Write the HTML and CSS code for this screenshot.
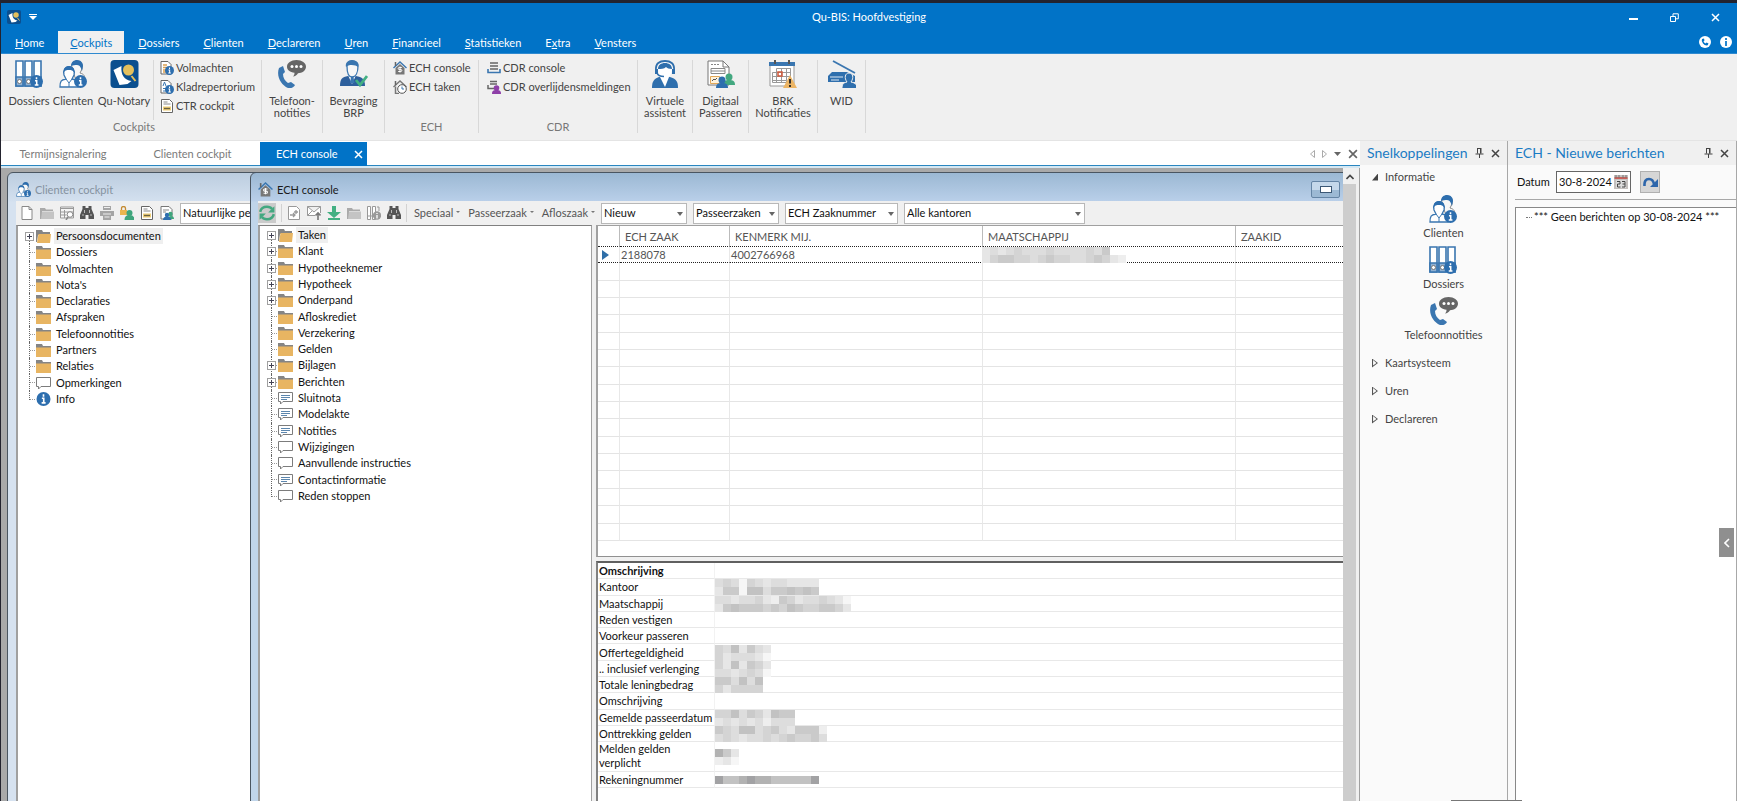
FILE: index.html
```html
<!DOCTYPE html>
<html lang="nl">
<head>
  <meta charset="UTF-8" />
  <title>Qu-BIS: Hoofdvestiging</title>
  <link rel="stylesheet" href="styles.css">
</head>
<body>
  <!-- Icon sprite -->
  <svg class="sprite" xmlns="http://www.w3.org/2000/svg">
    <symbol id="info-badge" viewBox="0 0 12 12">
      <circle cx="6" cy="6" r="6" fill="#2d6eae"/>
      <path d="M6 2v2M4.6 5.4h1.6v3.8M4.4 9.3h3.4" stroke="#fff" stroke-width="1.4" fill="none"/>
    </symbol>
    <symbol id="binders" viewBox="0 0 28 28">
      <path d="M1 1h7v25H1zM10 1h7v25h-7zM19 1h7v25h-7z" fill="#fff" stroke="#3a76b0" stroke-width="1.600"/>
      <path d="M1 17h7v9H1zM10 17h7v9h-7zM19 17h7v9h-7z" fill="#8fb0d2" stroke="#3a76b0" stroke-width="1.600"/>
      <g fill="#fff" stroke="#777"><circle cx="4.500" cy="21.500" r="2"/><circle cx="13.500" cy="21.500" r="2"/></g>
      <use href="#info-badge" x="15" y="15" width="13" height="13"/>
    </symbol>
    <symbol id="clients" viewBox="0 0 28 28">
      <path d="M13 9c-1-5 1-8 5-8s6 3 5 8l-2 4c4 1 5 3 5 7h-9z" fill="#f7f7f7" stroke="#888"/>
      <path d="M12 6c0-4 3-6 6-6 4 0 6 3 6 6l-1 5c-1-3-2-6-5-6-2 0-4 0-6 1z" fill="#2d6eae"/>
      <path d="M1 27c0-6 1-7 6-8l-2-4c-1-5 1-8 5-8s6 3 5 8l-2 4c5 1 6 2 6 8z" fill="#fff" stroke="#3a76b0" stroke-width="1.300"/>
      <path d="M4.500 13c0-5 2-7 5.500-7s5.500 2 5.500 7c-2-3-3-3-5.500-3s-4 0-5.500 3z" fill="#2d6eae"/>
      <path d="M7 19l3 4 3-4M10 23v4" stroke="#3a76b0" fill="none"/>
      <use href="#info-badge" x="15" y="15" width="13" height="13"/>
    </symbol>
    <symbol id="qunotary" viewBox="0 0 28 28">
      <rect width="28" height="28" rx="4" fill="#0b4f8f"/>
      <path d="M3 10l8-4c-1 9 3 14 10 15l-4 3-8 1z" fill="#fff"/>
      <circle cx="18" cy="10" r="5.500" fill="#e5c05c"/>
      <path d="M21 16l4 5" stroke="#e5c05c" stroke-width="2"/>
    </symbol>
    <symbol id="phone" viewBox="0 0 28 28">
      <path d="M18.500 0C24 0 28 3 28 6.700s-4 6.500-8 6.500c-1 2-3 3-5 3.300 1-1 1.500-2 1.500-3.800C12 12 9 10 9 6.700 9 3 13 0 18.500 0z" fill="#666"/>
      <g fill="#fff"><circle cx="14" cy="6.500" r="1.500"/><circle cx="18.500" cy="6.500" r="1.500"/><circle cx="23" cy="6.500" r="1.500"/></g>
      <path d="M1 8l4-2 2 6-2 2c0 4 2 7 5 9l3-1 4 3c-1 2-4 4-7 3C3 25-2 16 1 8z" fill="#3a76b0"/>
    </symbol>
    <symbol id="bevraging" viewBox="0 0 28 28">
      <path d="M0 26c0-7 2-9 8-10h8c6 1 9 3 9 10z" fill="#2d5f9c"/>
      <path d="M8 15l4 9 4-9z" fill="#fff"/><path d="M11 17h2.500l1 6h-4.500z" fill="#3a76b0"/>
      <path d="M7 6c0-3 2-5 5-5s6 2 6 5c0 6-2 11-6 11S7 12 7 6z" fill="#f7f7f7" stroke="#3a76b0" stroke-width="1.300"/>
      <path d="M6 7c-1-4 2-7 6-7s8 3 6 7c-2-2-9-3-12 0z" fill="#3a76b0"/>
      <path d="M16 20l4 5 7-9" stroke="#43b083" stroke-width="2.800" fill="none"/>
    </symbol>
    <symbol id="assistent" viewBox="0 0 28 28">
      <path d="M1 28c0-7 2-9 7-11h11c6 2 8 4 8 11z" fill="#2f6fad"/>
      <path d="M9 17l5 10 4-10z" fill="#fff"/>
      <path d="M7 9c0-5 3-8 7-8s7 3 7 8-3 9-7 9-7-4-7-9z" fill="#fff"/>
      <path d="M5 11C4 3 9 1 14 1s10 2 9 10" fill="none" stroke="#2f6fad" stroke-width="1.800"/>
      <path d="M7 9c0-4 3-6 7-6s7 2 7 6c-3 0-5-1-6-2-2 2-5 2-8 2z" fill="#2f6fad"/>
      <path d="M4 9h3v5H4zM21 9h3v5h-3z" fill="#2f6fad"/>
      <path d="M6 13c1 3 4 3.500 7 3.500" stroke="#2f6fad" stroke-width="1.500" fill="none"/>
    </symbol>
    <symbol id="digitaal" viewBox="0 0 28 28">
      <path d="M1 1h15l6 6v18H1z" fill="#fff" stroke="#777"/>
      <path d="M16 1v6h6" fill="none" stroke="#777"/>
      <path d="M4 4.500h8" stroke="#888" stroke-dasharray="2 1"/>
      <path d="M4 8.500h14v5H4zM4 11h14" stroke="#888" fill="none"/>
      <path d="M3.500 16.500h9v7h-9z" fill="#fff3dd" stroke="#e3a857"/><path d="M5 21l2-2 1 1 2-2" stroke="#555" fill="none"/>
      <circle cx="22" cy="17" r="3.500" fill="#43a880"/><path d="M16 25c0-4 2-5 6-5s6 1 6 5z" fill="#43a880"/>
      <circle cx="15" cy="20" r="3.500" fill="#2d6eae"/><path d="M9 28c0-4 2-5 6-5s6 1 6 5z" fill="#2d6eae"/>
    </symbol>
    <symbol id="brk" viewBox="0 0 28 28">
      <path d="M1 5h24v21H1z" fill="#fff" stroke="#999"/>
      <path d="M0 2h26v4H0z" fill="#3a76b0"/><path d="M6 0v4M20 0v4" stroke="#555" stroke-width="2"/>
      <path d="M7.500 8.500h14v4h-18v8h14v2h-14v-6h18M7.500 8.500v14M12.500 8.500v14M17.500 8.500v12M21.500 8.500v8" stroke="#999" fill="none"/>
      <path d="M9 12h4v4H9z" fill="none" stroke="#cf5a3c" stroke-width="1.500"/>
      <path d="M21 15l7 13H14z" fill="#ecb565"/><path d="M21 19v4.500M21 25v2" stroke="#222" stroke-width="1.800"/>
    </symbol>
    <symbol id="wid" viewBox="0 0 28 28">
      <path d="M5 1l22 12" stroke="#3a76b0" stroke-width="1.800"/>
      <path d="M4 12h15l8 4v6H0v-6z" fill="#2f6fad"/><path d="M2 17h13M3 20h8" stroke="#dfe9f3" stroke-width="1.200"/>
      <path d="M14 29c0-5 1-6 5-7-3-4-2-9 2-9s5 5 2 9c5 1 6 3 6 7z" fill="#2f6fad" stroke="#f0f0f0"/>
    </symbol>
    <symbol id="doc-orange" viewBox="0 0 14 14">
      <path d="M1 .5h7l3 3V13H1z" fill="#fff" stroke="#666"/><path d="M3 4h4M3 6.500h5M3 9h3M3 11h3" stroke="#dba04f" stroke-width="1.300"/>
      <use href="#info-badge" x="5" y="5" width="9" height="9"/>
    </symbol>
    <symbol id="doc-klad" viewBox="0 0 14 14">
      <path d="M1 .5h7l3 3V13H1z" fill="#fff" stroke="#666"/><path d="M3 6l1.500-4L6 6M3 8.500h4M3 11h3" stroke="#3a76b0" fill="none"/>
      <use href="#info-badge" x="5" y="5" width="9" height="9"/>
    </symbol>
    <symbol id="doc-ctr" viewBox="0 0 14 14">
      <path d="M1.500.5h8l3 3v10h-11z" fill="#fff" stroke="#666"/><path d="M3.500 3h4M3.500 5h7" stroke="#888"/>
      <path d="M3 7.500h8v4H3z" fill="#f0cf75"/><path d="M4 9.500h6" stroke="#6b6244" stroke-width="1.400"/>
    </symbol>
    <symbol id="house" viewBox="0 0 14 14">
      <path d="M2.500 7L7 3l4.500 4v6.500h-9z" fill="#777"/><path d="M.5 7L7 1l6.500 6" stroke="#3a76b0" stroke-width="1.400" fill="none"/>
      <path d="M2.500 1v4" stroke="#666" stroke-width="1.500"/>
      <path d="M8.800 6.500H6.200q-1 0-1 1t1 1h1.600q1 0 1 1t-1 1H5.200M7 5.500v6" stroke="#fff" fill="none"/>
    </symbol>
    <symbol id="house-clock" viewBox="0 0 14 14">
      <path d="M2.500 6.500v7H6" fill="none" stroke="#777" stroke-width="1.500"/><path d="M.5 7L7 1l6.500 6" stroke="#777" stroke-width="1.400" fill="none"/>
      <path d="M2.500 1v4" stroke="#666" stroke-width="1.500"/>
      <circle cx="9" cy="9" r="4.300" fill="#fff" stroke="#555"/><path d="M9 6.500V9h2" stroke="#3a76b0" fill="none"/>
    </symbol>
    <symbol id="cdr" viewBox="0 0 14 14">
      <path d="M3 2h8M3 5h8M3 8h8" stroke="#666" stroke-width="1.700"/>
      <path d="M1 8v3.500h12V8" fill="none" stroke="#3a76b0" stroke-width="1.600"/>
    </symbol>
    <symbol id="cdr-person" viewBox="0 0 14 14">
      <path d="M3 1.500h7M3 4h7M1 5v3.500h6" fill="none" stroke="#666" stroke-width="1.500"/>
      <circle cx="9.500" cy="8" r="2.800" fill="#8e3fa8"/><path d="M5 14c0-3 1-4 4.500-4S14 11 14 14z" fill="#8e3fa8"/>
    </symbol>
    <symbol id="new-doc" viewBox="0 0 14 14"><path d="M2 .5h7l3 3v10H2z" fill="#fff" stroke="#888"/><path d="M9 .5v3h3" fill="none" stroke="#888"/></symbol>
    <symbol id="folder-gray" viewBox="0 0 14 14"><path d="M0 2h5l1 1.500h7V5H2v8H0z" fill="#aaa"/><path d="M2 5.500h12V13H1z" fill="#c4c4c4"/></symbol>
    <symbol id="table-search" viewBox="0 0 14 14"><path d="M.5 1h13v11H.5zM0 2.500h14M4.500 4v8M.5 6h13M.5 9h6" fill="#f5f5f5" stroke="#999"/><circle cx="10" cy="8.500" r="2.800" fill="#fff" stroke="#888"/><path d="M8 11l-2 3" stroke="#888" stroke-width="1.500"/></symbol>
    <symbol id="binoculars" viewBox="0 0 14 14"><path d="M2.500 0h3v2h3V0h3v3L14 9v4H8.500V9h-3v4H0V9l2.500-6z" fill="#555"/><path d="M2 9h2M10 9h2M4.500 4v3M9.500 4v3" stroke="#bbb"/></symbol>
    <symbol id="printer" viewBox="0 0 14 14"><path d="M3 0h8v4H3zM0 5h14v5H0zM3 9h8v5H3z" fill="#a5a5a5"/><path d="M4 1.500h6M3 8h8M4.500 11h5" stroke="#eee"/></symbol>
    <symbol id="lock-person" viewBox="0 0 14 14"><path d="M1.500 4V2.500q0-2 2-2t2 2V4" fill="none" stroke="#c48b33" stroke-width="1.300"/><path d="M0 4h7v5H0z" fill="#eab54e"/><circle cx="9.500" cy="7" r="3" fill="#3fa57c"/><path d="M4.500 14q0-5 5-5t5 5z" fill="#3fa57c"/></symbol>
    <symbol id="doc-persons" viewBox="0 0 14 14"><path d="M1 .5h8l3 3V13H1z" fill="#fff" stroke="#777"/><path d="M3 4h6M3 6h3" stroke="#888"/><circle cx="10.500" cy="8" r="2.200" fill="#3fa57c"/><path d="M8 13q0-3 3-3t3 3z" fill="#3fa57c"/><circle cx="7" cy="9" r="2.200" fill="#2d6eae"/><path d="M3 14q0-3.500 4-3.500t4 3.500z" fill="#2d6eae"/></symbol>
    <symbol id="refresh" viewBox="0 0 14 14"><path d="M1 6q1-4.500 6-4.500 3 0 4.500 2M13 8q-1 4.500-6 4.500-3 0-4.500-2" fill="none" stroke="#43a880" stroke-width="2.200"/><path d="M13.500 1v5.500H8zM.5 13V7.500H6z" fill="#43a880"/></symbol>
    <symbol id="doc-arrows" viewBox="0 0 14 14"><path d="M1.500.5h8l3 3v10h-11z" fill="#fff" stroke="#999"/><path d="M7 6h4M9 4v4M3 9h5M6 7l2 2-2 2" stroke="#999" fill="none" stroke-width="1.300"/></symbol>
    <symbol id="mail-up" viewBox="0 0 14 14"><path d="M8 9.500H.5v-9h13V7M.5.500L7 6l6.500-5.500M.5 9.500L5 5" fill="#fff" stroke="#999"/><path d="M11 14V7M8.500 9.500L11 7l2.500 2.500" fill="none" stroke="#777" stroke-width="1.600"/></symbol>
    <symbol id="download" viewBox="0 0 14 14"><path d="M5 0h4v6h5l-7 6-7-6h5z" fill="#43b083"/><path d="M1 13h12" stroke="#43b083" stroke-width="2"/></symbol>
    <symbol id="binders-gray" viewBox="0 0 14 14"><path d="M.5.500h3v13h-3zM5.500.500h3v13h-3zM0 10h9" fill="#fff" stroke="#999"/><path d="M10 1h2v4" fill="none" stroke="#999"/><circle cx="10" cy="9.500" r="4.200" fill="#999"/><path d="M10 7v1M10 9v3.500" stroke="#fff" stroke-width="1.300"/></symbol>
    <symbol id="folder" viewBox="0 0 15 14"><path d="M0 1h6l1 2h8v2H0z" fill="#858585"/><path d="M0 4.500h15V14H0z" fill="#e8b562"/></symbol>
    <symbol id="folder-open" viewBox="0 0 15 14"><path d="M0 1h6l1 2h7v3H2L1 13H0z" fill="#858585"/><path d="M2.500 5H15l-1 9H1z" fill="#e8b562"/></symbol>
    <symbol id="bubble" viewBox="0 0 15 14"><path d="M.5 1.500h14v9H5L2.500 13v-2.500h-2z" fill="#fff" stroke="#7c7c7c"/></symbol>
    <symbol id="bubble-text" viewBox="0 0 15 14"><path d="M.5 1.500h14v9H5L2.500 13v-2.500h-2z" fill="#fff" stroke="#7c7c7c"/><path d="M3 4.500h9M3 6.500h9M3 8.500h6" stroke="#5c86ad"/></symbol>
    <symbol id="pin" viewBox="0 0 9 10"><path d="M2.500 0v5.500M6 0v5.500M2.500.500H6M.5 6h8M4.500 6v4M5.500.500v5" fill="none" stroke="#444"/></symbol>
    <symbol id="cross" viewBox="0 0 9 9"><path d="M1 1l7 7M8 1L1 8" stroke="currentColor" stroke-width="1.500"/></symbol>
  </svg>

  <div class="app">
    <header class="titlebar">
      <div class="quick">
        <svg width="14" height="14"><use href="#qunotary"/></svg>
        <svg width="8" height="6" viewBox="0 0 8 6"><path d="M0 .5h8" stroke="#fff"/><path d="M0 2h8L4 6z" fill="#fff"/></svg>
      </div>
      <h1>Qu-BIS: Hoofdvestiging</h1>
      <div class="window-buttons">
        <button aria-label="Minimaliseren"><svg width="9" height="9"><path d="M0 6h9" stroke="#fff" stroke-width="2"/></svg></button>
        <button aria-label="Herstellen"><svg width="9" height="9"><path d="M.5 3.500h5v5h-5zM3 3V.8h5.300v5H6" fill="none" stroke="#fff"/></svg></button>
        <button aria-label="Sluiten"><svg width="9" height="9"><use href="#cross"/></svg></button>
      </div>
    </header>

    <nav class="menu">
      <a href="#"><u>H</u>ome</a>
      <a href="#" class="active"><u>C</u>ockpits</a>
      <a href="#"><u>D</u>ossiers</a>
      <a href="#"><u>C</u>lienten</a>
      <a href="#"><u>D</u>eclareren</a>
      <a href="#"><u>U</u>ren</a>
      <a href="#"><u>F</u>inancieel</a>
      <a href="#"><u>S</u>tatistieken</a>
      <a href="#">E<u>x</u>tra</a>
      <a href="#"><u>V</u>ensters</a>
      <div class="menu-help">
        <svg width="12" height="12" viewBox="0 0 12 12"><circle cx="6" cy="6" r="6" fill="#fff"/><path d="M3 3l2-.5.5 2-1 .8q.7 1.700 2 2.200l1-1 2 1-.8 1.800Q6 10 4 7.500T3 3z" fill="#0173c7"/></svg>
        <svg width="12" height="12" viewBox="0 0 12 12"><circle cx="6" cy="6" r="6" fill="#fff"/><path d="M6 2v2M6 5v5" stroke="#0173c7" stroke-width="1.700"/></svg>
      </div>
    </nav>

    <div class="ribbon">
      <section class="group g-cockpits">
        <div class="group-items">
          <button class="big"><svg width="28" height="28"><use href="#binders"/></svg>Dossiers</button>
          <button class="big"><svg width="28" height="28"><use href="#clients"/></svg>Clienten</button>
          <button class="big wide"><svg width="29" height="28"><use href="#qunotary"/></svg>Qu-Notary</button>
          <div class="stack split">
            <button><svg width="14" height="14"><use href="#doc-orange"/></svg>Volmachten</button>
            <button><svg width="14" height="14"><use href="#doc-klad"/></svg>Kladrepertorium</button>
            <button><svg width="14" height="14"><use href="#doc-ctr"/></svg>CTR cockpit</button>
          </div>
        </div>
        <h2>Cockpits</h2>
      </section>
      <section class="group g-phone">
        <button class="big"><svg width="28" height="28"><use href="#phone"/></svg>Telefoon-<br>notities</button>
      </section>
      <section class="group g-brp">
        <button class="big"><svg width="28" height="28"><use href="#bevraging"/></svg>Bevraging<br>BRP</button>
      </section>
      <section class="group g-ech">
        <div class="stack">
          <button><svg width="14" height="14"><use href="#house"/></svg>ECH console</button>
          <button><svg width="14" height="14"><use href="#house-clock"/></svg>ECH taken</button>
        </div>
        <h2>ECH</h2>
      </section>
      <section class="group g-cdr">
        <div class="stack">
          <button><svg width="14" height="14"><use href="#cdr"/></svg>CDR console</button>
          <button><svg width="14" height="14"><use href="#cdr-person"/></svg>CDR overlijdensmeldingen</button>
        </div>
        <h2>CDR</h2>
      </section>
      <section class="group g-va">
        <button class="big"><svg width="28" height="28"><use href="#assistent"/></svg>Virtuele<br>assistent</button>
      </section>
      <section class="group g-dp">
        <button class="big"><svg width="28" height="28"><use href="#digitaal"/></svg>Digitaal<br>Passeren</button>
      </section>
      <section class="group g-brk">
        <button class="big"><svg width="28" height="28"><use href="#brk"/></svg>BRK<br>Notificaties</button>
      </section>
      <section class="group g-wid">
        <button class="big"><svg width="28" height="28"><use href="#wid"/></svg>WID</button>
      </section>
    </div>

    <div class="workspace">
      <main class="documents">
        <div class="doc-tabs">
          <button class="tab-a">Termijnsignalering</button>
          <button class="tab-b">Clienten cockpit</button>
          <button class="active">ECH console <svg width="9" height="9"><use href="#cross"/></svg></button>
          <div class="tab-tools">
            <svg width="5" height="8"><path d="M4.500.500v7l-4-3.500z" fill="none" stroke="#aaa"/></svg>
            <svg width="5" height="8"><path d="M.5.500v7l4-3.500z" fill="none" stroke="#aaa"/></svg>
            <svg width="7" height="4"><path d="M0 0h7L3.500 4z" fill="#666"/></svg>
            <svg class="gray" width="10" height="10"><use href="#cross"/></svg>
          </div>
        </div>

        <div class="mdi">
          <div class="desktop">
            <section class="window cockpit">
              <header><svg width="15" height="15"><use href="#clients"/></svg>Clienten cockpit</header>
              <div class="toolbar">
                <button aria-label="Nieuw"><svg width="14" height="14"><use href="#new-doc"/></svg></button>
                <button aria-label="Openen"><svg width="14" height="14"><use href="#folder-gray"/></svg></button>
                <button aria-label="Zoek in tabel"><svg width="14" height="14"><use href="#table-search"/></svg></button>
                <button aria-label="Zoeken"><svg width="14" height="14"><use href="#binoculars"/></svg></button>
                <button aria-label="Afdrukken"><svg width="14" height="14"><use href="#printer"/></svg></button>
                <button aria-label="Toegang"><svg width="14" height="14"><use href="#lock-person"/></svg></button>
                <button aria-label="CTR"><svg width="14" height="14"><use href="#doc-ctr"/></svg></button>
                <button aria-label="Passeren"><svg width="14" height="14"><use href="#doc-persons"/></svg></button>
                <span class="combo c-person"><select aria-label="Soort persoon"><option>Natuurlijke personen</option></select></span>
              </div>
              <div class="pane">
                <ul class="tree tree-client">
                  <li class="selected plus"><svg><use href="#folder-open"/></svg><span>Persoonsdocumenten</span></li>
                  <li><svg><use href="#folder"/></svg><span>Dossiers</span></li>
                  <li><svg><use href="#folder"/></svg><span>Volmachten</span></li>
                  <li><svg><use href="#folder"/></svg><span>Nota's</span></li>
                  <li><svg><use href="#folder"/></svg><span>Declaraties</span></li>
                  <li><svg><use href="#folder"/></svg><span>Afspraken</span></li>
                  <li><svg><use href="#folder"/></svg><span>Telefoonnotities</span></li>
                  <li><svg><use href="#folder"/></svg><span>Partners</span></li>
                  <li><svg><use href="#folder"/></svg><span>Relaties</span></li>
                  <li><svg><use href="#bubble"/></svg><span>Opmerkingen</span></li>
                  <li><svg><use href="#info-badge"/></svg><span>Info</span></li>
                </ul>
              </div>
            </section>

            <section class="window ech">
              <header>
                <svg width="15" height="15"><use href="#house"/></svg>ECH console
                <button class="min" aria-label="Minimaliseren"></button>
              </header>
              <div class="toolbar">
                <button class="pressed" aria-label="Vernieuwen"><svg width="16" height="16"><use href="#refresh"/></svg></button>
                <span class="sep"></span>
                <button aria-label="Koppelen"><svg width="14" height="14"><use href="#doc-arrows"/></svg></button>
                <button aria-label="Verzenden"><svg width="14" height="14"><use href="#mail-up"/></svg></button>
                <button aria-label="Ophalen"><svg width="14" height="14"><use href="#download"/></svg></button>
                <button aria-label="Openen"><svg width="14" height="14"><use href="#folder-gray"/></svg></button>
                <button aria-label="Dossier info"><svg width="14" height="14"><use href="#binders-gray"/></svg></button>
                <button aria-label="Zoeken"><svg width="14" height="14"><use href="#binoculars"/></svg></button>
                <span class="sep"></span>
                <button class="drop">Speciaal</button>
                <button class="drop">Passeerzaak</button>
                <button class="drop">Afloszaak</button>
                <span class="combo c-status"><select aria-label="Status"><option>Nieuw</option></select></span>
                <span class="combo c-status"><select aria-label="Soort zaak"><option>Passeerzaken</option></select></span>
                <span class="combo c-number"><select aria-label="Zoeken op"><option>ECH Zaaknummer</option></select></span>
                <span class="combo c-office"><select aria-label="Kantoor"><option>Alle kantoren</option></select></span>
              </div>
              <div class="split-view">
                <div class="pane">
                  <ul class="tree tree-ech">
                    <li class="selected plus"><svg><use href="#folder-open"/></svg><span>Taken</span></li>
                    <li class="plus"><svg><use href="#folder"/></svg><span>Klant</span></li>
                    <li class="plus"><svg><use href="#folder"/></svg><span>Hypotheeknemer</span></li>
                    <li class="plus"><svg><use href="#folder"/></svg><span>Hypotheek</span></li>
                    <li class="plus"><svg><use href="#folder"/></svg><span>Onderpand</span></li>
                    <li><svg><use href="#folder"/></svg><span>Afloskrediet</span></li>
                    <li><svg><use href="#folder"/></svg><span>Verzekering</span></li>
                    <li><svg><use href="#folder"/></svg><span>Gelden</span></li>
                    <li class="plus"><svg><use href="#folder"/></svg><span>Bijlagen</span></li>
                    <li class="plus"><svg><use href="#folder"/></svg><span>Berichten</span></li>
                    <li><svg><use href="#bubble-text"/></svg><span>Sluitnota</span></li>
                    <li><svg><use href="#bubble-text"/></svg><span>Modelakte</span></li>
                    <li><svg><use href="#bubble-text"/></svg><span>Notities</span></li>
                    <li><svg><use href="#bubble"/></svg><span>Wijzigingen</span></li>
                    <li><svg><use href="#bubble"/></svg><span>Aanvullende instructies</span></li>
                    <li><svg><use href="#bubble-text"/></svg><span>Contactinformatie</span></li>
                    <li><svg><use href="#bubble"/></svg><span>Reden stoppen</span></li>
                  </ul>
                </div>
                <div class="details">
                  <div class="grid-pane">
                    <table class="cases">
                      <thead>
                        <tr><th class="col-mark"></th><th class="col-case">ECH ZAAK</th><th class="col-ref">KENMERK MIJ.</th><th class="col-ref">MAATSCHAPPIJ</th><th>ZAAKID</th></tr>
                      </thead>
                      <tbody id="caseRows">
                        <tr class="current"><td><i class="marker"></i></td><td>2188078</td><td>4002766968</td><td><div class="mosaic" data-tones="3434544454444546 356655456554456532"></div></td><td></td></tr>
                      </tbody>
                    </table>
                  </div>
                  <div class="props-pane">
                    <table class="props">
                      <tr><th class="strong">Omschrijving</th><td></td></tr>
                      <tr><th>Kantoor</th><td><div class="mosaic" data-tones="4541543443333 3661774667676"></div></td></tr>
                      <tr><th>Maatschappij</th><td><div class="mosaic" data-tones="44344532653445431 36766656576556653"></div></td></tr>
                      <tr><th>Reden vestigen</th><td></td></tr>
                      <tr><th>Voorkeur passeren</th><td></td></tr>
                      <tr><th>Offertegeldigheid</th><td><div class="mosaic" data-tones="5473643 5344431"></div></td></tr>
                      <tr><th>.. inclusief verlenging</th><td><div class="mosaic" data-tones="5373653 4434541"></div></td></tr>
                      <tr><th>Totale leningbedrag</th><td><div class="mosaic" data-tones="664747 535555"></div></td></tr>
                      <tr><th>Omschrijving</th><td></td></tr>
                      <tr><th>Gemelde passeerdatum</th><td><div class="mosaic" data-tones="5574653766 3434342444"></div></td></tr>
                      <tr><th>Onttrekking gelden</th><td><div class="mosaic" data-tones="65477456436662 45434454565564"></div></td></tr>
                      <tr class="double"><th>Melden gelden<br>verplicht</th><td><div class="mosaic" data-tones="863 231"></div></td></tr>
                      <tr><th>Rekeningnummer</th><td><div class="mosaic" data-tones="9778988777779"></div></td></tr>
                    </table>
                  </div>
                </div>
              </div>
            </section>
          </div>
          <div class="scrollbar"><svg width="8" height="6"><path d="M.5 5L4 1.500 7.500 5" fill="none" stroke="#444" stroke-width="1.600"/></svg></div>
        </div>
      </main>

      <aside class="panel shortcuts">
        <header><h2>Snelkoppelingen</h2><svg width="9" height="10"><use href="#pin"/></svg><svg width="9" height="9"><use href="#cross"/></svg></header>
        <div class="panel-body">
          <button class="fold open">Informatie</button>
          <div class="links">
            <a href="#"><svg width="28" height="28"><use href="#clients"/></svg>Clienten</a>
            <a href="#"><svg width="28" height="28"><use href="#binders"/></svg>Dossiers</a>
            <a href="#"><svg width="28" height="28"><use href="#phone"/></svg>Telefoonnotities</a>
          </div>
          <button class="fold">Kaartsysteem</button>
          <button class="fold">Uren</button>
          <button class="fold">Declareren</button>
        </div>
      </aside>

      <aside class="panel messages">
        <header><h2>ECH - Nieuwe berichten</h2><svg width="9" height="10"><use href="#pin"/></svg><svg width="9" height="9"><use href="#cross"/></svg></header>
        <div class="panel-body">
          <div class="date-row">
            <label for="datum">Datum</label>
            <div class="date-box">
              <input type="text" id="datum" value="30-8-2024">
              <svg width="14" height="14" viewBox="0 0 14 14"><path d="M0 0h14v14H0z" fill="#c4c0be"/><path d="M.5 2h13v2H.5z" fill="#c9605a"/><path d="M2 0v3M5 0v3M9 0v3M12 0v3" stroke="#777"/><path d="M2 5h10v8H2z" fill="#ddd"/><path d="M3 6.500h3v2.500H3.500V12H6.500M8 6.500h3V12H8M8.500 9H11" fill="none" stroke="#444"/></svg>
            </div>
            <button class="reload" aria-label="Ophalen"><svg width="15" height="12" viewBox="0 0 15 12"><path d="M1.500 10Q1 3 6 3q4 0 5 5" fill="none" stroke="#2d66ab" stroke-width="2.600"/><path d="M15 3v8H7z" fill="#2d66ab"/></svg></button>
          </div>
          <div class="message-list">
            <p>*** Geen berichten op 30-08-2024 ***</p>
            <button class="slide-out" aria-label="Uitklappen"><svg width="6" height="10"><path d="M5 1L1 5l4 4" fill="none" stroke="#fff" stroke-width="1.600"/></svg></button>
          </div>
        </div>
      </aside>
    </div>
    <div class="handle"></div>
  </div>

  <script src="script.js"></script>
</body>
</html>
```

FILE: styles.css
```css
* {
  box-sizing: border-box;
}

body, h1, h2, ul, p {
  margin: 0;
  padding: 0;
}

body {
  font-family: Lato, 'Open Sans', sans-serif;
  font-size: 11px;
  line-height: 16px;
  color: #1a1a1a;
  background: #fff;
}

button, input, select {
  font: inherit;
  color: inherit;
  margin: 0;
  padding: 0;
  border: none;
  background: none;
}

a {
  color: inherit;
  text-decoration: none;
}

svg {
  flex: none;
  display: block;
}

.sprite {
  position: absolute;
  width: 0;
  height: 0;
}

.app {
  display: flex;
  flex-direction: column;
  height: 100vh;
  border-top: 3px solid #23232e;
  border-left: 1px solid #23232e;
  overflow: hidden;
  position: relative;
}

/* Title bar */
.titlebar {
  display: grid;
  grid-template-columns: 1fr auto 1fr;
  align-items: center;
  height: 28px;
  background: #0173c7;
  color: #fff;
}

.titlebar h1 {
  font-size: 11px;
  font-weight: normal;
}

.quick {
  display: flex;
  align-items: center;
  gap: 8px;
  padding-left: 6px;
}

.window-buttons {
  display: flex;
  justify-content: flex-end;
  gap: 32px;
  padding-right: 17px;
}

/* Menu */
.menu {
  display: flex;
  height: 23px;
  padding-left: 2px;
  background: #0173c7;
  border-bottom: 1px solid #2f8ad0;
  color: #fff;
}

.menu a {
  padding: 4px 12px 0;
}

.menu a.active {
  margin: 0 2px;
  background: #f0f0f0;
  color: #0173c7;
}

.menu-help {
  display: flex;
  gap: 9px;
  margin-left: auto;
  padding: 5px 5px 0 0;
}

/* Ribbon */
.ribbon {
  display: flex;
  height: 87px;
  padding: 6px 0 7px;
  background: #f0f0f0;
  border-bottom: 1px solid #e4e4e4;
  color: #444;
}

.group {
  display: flex;
  flex-direction: column;
  justify-content: space-between;
  border-right: 1px solid #d8d8d8;
}

.group h2 {
  font-size: 11px;
  font-weight: normal;
  line-height: 12px;
  text-align: center;
  color: #777;
}

.g-cockpits { width: 261px; padding-left: 6px; }
.g-phone { width: 61px; }
.g-brp { width: 62px; }
.g-ech { width: 94px; }
.g-cdr { width: 159px; }
.g-va { width: 55px; }
.g-dp { width: 56px; }
.g-brk { width: 69px; }
.g-wid { width: 48px; }

.group-items {
  display: flex;
}

.big {
  display: flex;
  flex-direction: column;
  align-items: center;
  line-height: 12px;
  width: 100%;
}

.big svg {
  margin-bottom: 7px;
}

.group-items .big {
  width: 44px;
}

.group-items .big.wide {
  width: 58px;
}

.stack {
  display: flex;
  flex-direction: column;
  align-items: flex-start;
  padding-left: 8px;
}

.stack button {
  display: flex;
  align-items: center;
  gap: 2px;
  height: 19px;
  padding-bottom: 3px;
  white-space: nowrap;
}

.stack.split {
  border-left: 1px solid #d8d8d8;
  height: 60px;
  padding-left: 6px;
}

/* Workspace */
.workspace {
  flex: 1;
  display: grid;
  grid-template-columns: 1fr 148px 229px;
  min-height: 0;
}

.documents {
  display: flex;
  flex-direction: column;
  min-width: 0;
}

.doc-tabs {
  display: flex;
  height: 27px;
  padding-top: 1px;
  border-bottom: 2px solid #d5e8f3;
  box-shadow: inset 0 -1px 0 #2a86c0;
  background: #fff;
  color: #7a7a7a;
}

.doc-tabs button.tab-a { width: 124px; }
.doc-tabs button.tab-b { width: 135px; }

.doc-tabs button.active {
  display: flex;
  align-items: center;
  justify-content: space-between;
  width: 107px;
  padding: 0 4px 0 16px;
  background: #0173c7;
  color: #fff;
}

.tab-tools {
  display: flex;
  align-items: center;
  gap: 7px;
  margin-left: auto;
  padding-right: 2px;
}

.tab-tools .gray {
  color: #666;
}

.mdi {
  flex: 1;
  display: flex;
  min-height: 0;
  border-right: 1px solid #a0a0a0;
  background: #f0f0f0;
}

.desktop {
  flex: 1;
  position: relative;
  overflow: hidden;
  background: #a9a9a9;
}

.scrollbar {
  width: 13px;
  margin-right: 3px;
  background: linear-gradient(#f0f0f0 16px, #cdcdcd 16px);
  display: flex;
  justify-content: center;
  padding-top: 6px;
}

/* MDI windows */
.window {
  position: absolute;
  top: 4px;
  bottom: -4px;
  display: flex;
  flex-direction: column;
  border: 1px solid #4a5560;
  border-radius: 6px 0 0 0;
  background: linear-gradient(#9bb8d3 0, #b9cfe9 28px, #c0d5ea 29px);
}

.window.cockpit {
  left: 6px;
  width: 600px;
  padding-left: 8px;
  background: linear-gradient(#bccddf 0, #d3e0ef 28px, #d6e2f0 29px);
  color: #8592a0;
}

.window.ech {
  left: 249px;
  right: -1px;
  padding-left: 7px;
}

.window header {
  display: flex;
  align-items: center;
  gap: 4px;
  height: 28px;
  padding-top: 5px;
}

.window .min {
  width: 29px;
  height: 17px;
  margin: 0 3px 0 auto;
  border: 1px solid #6585a5;
  border-radius: 2px;
  background: linear-gradient(#c5d8ea 50%, #9cb9d4 50%);
  display: flex;
  justify-content: center;
  align-items: center;
}

.window .min::before {
  content: "";
  width: 10px;
  height: 5px;
  border: 1px solid #3c5875;
  background: #fff;
}

.toolbar {
  display: flex;
  align-items: center;
  gap: 6px;
  height: 24px;
  background: #f0f0f0;
  color: #555;
}

.cockpit .toolbar {
  padding-left: 4px;
}

.sep {
  width: 1px;
  height: 18px;
  margin: 0 -1px;
  background: #d2d2d2;
}

.toolbar .pressed {
  width: 18px;
  height: 20px;
  padding: 2px 1px;
  background: #cbcbcb;
}

.drop {
  display: flex;
  align-items: center;
  gap: 3px;
  padding-left: 2px;
}

.drop::after {
  content: "";
  margin-bottom: 3px;
  border: 2px solid transparent;
  border-top-color: #777;
  border-bottom: 0;
}

.combo {
  position: relative;
  height: 21px;
  border: 1px solid #b8b8b8;
  background: #fff;
  color: #111;
}

.combo select {
  width: 100%;
  height: 19px;
  padding-left: 2px;
  appearance: none;
}

.combo::after {
  content: "";
  position: absolute;
  right: 3px;
  top: 8px;
  border: 3px solid transparent;
  border-top: 4px solid #666;
  border-bottom: 0;
}

.c-person { width: 130px; }
.c-status { width: 86px; }
.c-number { width: 113px; }
.c-office { width: 181px; }

.pane {
  flex: 1;
  background: #fff;
  border-left: 2px solid #a0a0a0;
  border-top: 1px solid #808080;
  padding-top: 1px;
}

.cockpit .pane {
  padding-top: 2px;
}

/* Trees */
.tree {
  list-style: none;
  display: grid;
  grid-auto-rows: 1fr;
  color: #111;
}

.tree-client { height: 179px; }
.tree-ech { height: 277px; }

.tree li {
  position: relative;
  display: flex;
  align-items: center;
  gap: 3px;
  padding-left: 18px;
}

.tree svg {
  width: 15px;
  height: 14px;
}

.tree span {
  padding: 0 2px;
  line-height: 16px;
}

.tree .selected span {
  background: #efefef;
}

/* dotted guides and the expander box */
.tree li::before {
  content: "";
  position: absolute;
  left: 11px;
  top: 0;
  bottom: 0;
  width: 6px;
  border-left: 1px dotted #666;
  background: repeating-linear-gradient(90deg, #999 0 1px, transparent 1px 2px) 0 8px / 6px 1px no-repeat;
}

.tree li:last-child::before {
  bottom: 7px;
}

.tree li:first-child::before {
  top: 8px;
  background: none;
}

.tree .plus::after {
  content: "";
  position: absolute;
  left: 8px;
  top: 5px;
  width: 7px;
  height: 7px;
  outline: 1px solid #a0a0a0;
  background:
    linear-gradient(#445, #445) center / 5px 1px no-repeat,
    linear-gradient(#445, #445) center / 1px 5px no-repeat,
    #fff;
}

/* ECH window content */
.split-view {
  flex: 1;
  display: grid;
  grid-template-columns: 334px 1fr;
  gap: 4px;
  min-height: 0;
  background: #f0f0f0;
}

.split-view .pane {
  border-right: 1px solid #a0a0a0;
}

.details {
  display: flex;
  flex-direction: column;
  min-width: 0;
}

.grid-pane {
  height: 332px;
  border-left: 2px solid #a0a0a0;
  border-top: 1px solid #a0a0a0;
  border-bottom: 1px solid #909090;
  background: #fff;
}

table {
  border-collapse: separate;
  border-spacing: 0;
}

.cases {
  table-layout: fixed;
  width: 100%;
  height: 315px;
  color: #555;
}

.cases th, .cases td {
  text-align: left;
  font-weight: normal;
  line-height: 15px;
  padding: 0 0 0 1px;
  height: 17px;
  border-bottom: 1px solid #e4e4e4;
  border-right: 1px solid #e8e8e8;
}

.cases th {
  height: 20px;
  padding-left: 5px;
  border-bottom: none;
  border-right: 1px solid #bbb;
}

.cases th:last-child, .cases td:last-child {
  border-right: none;
}

.col-mark { width: 22px; }
.col-case { width: 110px; }
.col-ref { width: 253px; }

.cases .current td {
  border-top: 1px dotted #222;
  border-bottom: 1px dotted #222;
}

.marker {
  display: block;
  margin-left: 3px;
  width: 0;
  border: 5px solid transparent;
  border-left: 7px solid #2f6fa8;
  border-right: 0;
}

.cases .mosaic {
  margin: -1px 0 -1px -2px;
}

.mosaic {
  position: relative;
}

.mosaic div {
  display: flex;
}

.mosaic i {
  width: 8px;
  height: 8px;
}

.props-pane {
  flex: 1;
  margin-top: 4px;
  border-left: 2px solid #808080;
  border-top: 2px solid #606060;
  background: #fff;
}

.props {
  width: 100%;
  height: 225px;
  color: #111;
}

.props .mosaic {
  margin-bottom: -1px;
}

.props th {
  width: 117px;
  padding: 0 0 0 1px;
  text-align: left;
  font-weight: normal;
  line-height: 15px;
  white-space: nowrap;
  border-bottom: 1px solid #e8e8e8;
  border-right: 1px solid #f2f2f2;
}

.props td {
  padding: 0;
  border-bottom: 1px solid #e8e8e8;
}

.props .strong {
  font-weight: bold;
}

.props .double th {
  line-height: 14px;
}

/* Side panels */
.panel {
  display: flex;
  flex-direction: column;
  background: #fafafa;
  color: #444;
  border-right: 1px solid #a8a8a8;
}

.panel header {
  display: flex;
  align-items: center;
  gap: 7px;
  height: 24px;
  padding: 0 7px;
  background: #f0f0f0;
}

.panel h2 {
  flex: 1;
  font-size: 14px;
  font-weight: normal;
  color: #1b7cc4;
  white-space: nowrap;
}

.shortcuts .panel-body {
  padding-top: 4px;
}

.fold {
  display: flex;
  align-items: center;
  gap: 7px;
  height: 28px;
  padding-left: 12px;
}

.fold.open {
  height: 16px;
}

.fold::before {
  content: "";
  width: 6px;
  height: 9px;
  background: #555;
  clip-path: polygon(0 0, 100% 50%, 0 100%, 0 85%, 75% 50%, 18% 18%, 18% 90%, 0 100%);
}

.fold.open::before {
  height: 7px;
  background: #444;
  clip-path: polygon(100% 0, 100% 100%, 0 100%);
}

.links {
  display: flex;
  flex-direction: column;
  align-items: center;
  padding: 10px 0 1px 20px;
}

.links a {
  display: flex;
  flex-direction: column;
  align-items: center;
  gap: 2px;
  height: 51px;
}

.messages .panel-body {
  flex: 1;
  display: flex;
  flex-direction: column;
  padding-left: 7px;
  color: #111;
}

.date-row {
  display: flex;
  align-items: center;
  height: 35px;
  padding-left: 2px;
  border-bottom: 1px solid #a8a8a8;
}

.date-row label {
  width: 39px;
}

.date-box {
  display: flex;
  align-items: center;
  width: 75px;
  height: 22px;
  padding: 0 2px;
  border: 1px solid #666;
  background: #fff;
}

.date-box input {
  flex: 1;
  min-width: 0;
}

.reload {
  display: flex;
  align-items: center;
  justify-content: center;
  width: 20px;
  height: 22px;
  margin-left: 9px;
  border: 1px solid #b0b0b0;
  background: #d6d6d6;
}

.message-list {
  position: relative;
  flex: 1;
  margin-top: 7px;
  padding: 1px 0 0 10px;
  border-left: 1px solid #888;
  border-top: 1px solid #888;
  background: #fff;
}

.message-list p {
  display: flex;
  align-items: center;
  gap: 2px;
  white-space: nowrap;
}

.message-list p::before {
  content: "";
  width: 6px;
  border-top: 1px dotted #777;
}

.slide-out {
  position: absolute;
  right: 2px;
  top: 320px;
  width: 15px;
  height: 29px;
  display: flex;
  align-items: center;
  justify-content: center;
  background: #8f8f8f;
}

.handle {
  position: absolute;
  right: 215px;
  bottom: 0;
  width: 71px;
  height: 1px;
  background: #777;
}
```

FILE: script.js
```js
const tones = ['transparent', '#f6f6f6', '#eeeeee', '#e6e6e6', '#dddddd', '#d4d4d4', '#cacaca', '#c2c2c2', '#b2b2b2', '#a2a2a4'];

// masked values: every digit is the tone of one block
document.querySelectorAll('.mosaic').forEach((el) => {
  el.dataset.tones.split(' ').forEach((line) => {
    const row = document.createElement('div');
    for (const digit of line) {
      const block = document.createElement('i');
      block.style.background = tones[digit];
      row.appendChild(block);
    }
    el.appendChild(row);
  });
});

// fill the grid with empty rows
const caseRows = document.getElementById('caseRows');
for (let i = 0; i < 16; i++) {
  const tr = document.createElement('tr');
  tr.innerHTML = '<td></td><td></td><td></td><td></td><td></td>';
  caseRows.appendChild(tr);
}
```
